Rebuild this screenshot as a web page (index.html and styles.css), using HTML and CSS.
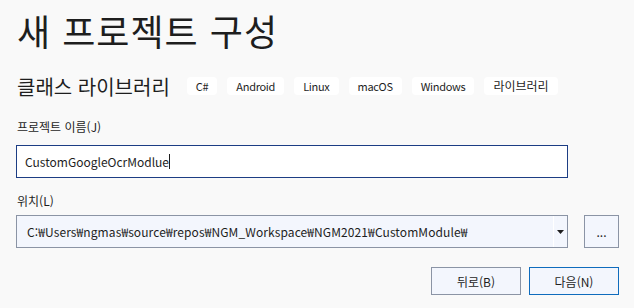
FILE: index.html
```html
<!DOCTYPE html>
<html lang="ko">
<head>
    <meta charset="UTF-8">
    <title>새 프로젝트 구성</title>
    <link rel="stylesheet" href="styles.css">
</head>
<body>
<div class="dialog">
    <h1>새 프로젝트 구성</h1>

    <div class="template">
        <span class="template-name">클래스 라이브러리</span>
        <div class="tags">
            <span class="tag">C#</span>
            <span class="tag">Android</span>
            <span class="tag">Linux</span>
            <span class="tag">macOS</span>
            <span class="tag">Windows</span>
            <span class="tag tag-ko">라이브러리</span>
        </div>
    </div>

    <label class="field-label">프로젝트 이름(J)</label>
    <div class="text-box focused">
        <span class="value">CustomGoogleOcrModlue</span><span class="caret"></span>
    </div>

    <label class="field-label location-label">위치(L)</label>
    <div class="location-row">
        <div class="combo">
            <span class="value">C:₩Users₩ngmas₩source₩repos₩NGM_Workspace₩NGM2021₩CustomModule₩</span>
            <span class="combo-arrow">
                <svg width="7" height="4" viewBox="0 0 7 4"><path d="M0 0h7L3.5 4z" fill="#1e1e1e"/></svg>
            </span>
        </div>
        <button class="browse">...</button>
    </div>

    <div class="actions">
        <button class="btn">뒤로(B)</button>
        <button class="btn primary">다음(N)</button>
    </div>
</div>
</body>
</html>
```

FILE: styles.css
```css
body {
    margin: 0;
    background-color: #f9f9f9;
    color: #1e1e1e;
    font-family: "Noto Sans CJK KR", "Noto Sans", sans-serif;
}
.dialog {
    padding: 8px 15px 0 16px;
}
h1 {
    margin: 0 0 0 1px;
    font-size: 36px;
    font-weight: 400;
    line-height: 44px;
    letter-spacing: 1px;
}
.template {
    display: flex;
    align-items: center;
    margin-top: 22px;
    height: 24px;
}
.template-name {
    font-size: 20px;
    margin-left: 1px;
}
.tags {
    display: flex;
    gap: 10px;
    margin-left: 17px;
}
.tag {
    background-color: #fff;
    border-radius: 4px;
    font-size: 11px;
    height: 18px;
    line-height: 18px;
    padding: 0 9px;
    letter-spacing: -0.3px;
}
.tag-ko {
    font-size: 12px;
    letter-spacing: 0;
}
.field-label {
    display: block;
    font-size: 12px;
    line-height: 16px;
    margin-top: 21px;
    margin-left: 1px;
}
.location-label {
    margin-top: 15px;
}
.text-box {
    display: flex;
    align-items: center;
    box-sizing: border-box;
    width: 552px;
    height: 33px;
    margin-top: 10px;
    padding: 0 8px;
    background-color: #fff;
    border: 1px solid #1c3d84;
    font-size: 12px;
}
.caret {
    width: 1px;
    height: 15px;
    background-color: #1e1e1e;
}
.location-row {
    display: flex;
    gap: 16px;
    margin-top: 6px;
}
.combo {
    display: flex;
    align-items: center;
    box-sizing: border-box;
    width: 552px;
    height: 33px;
    padding-left: 10px;
    background-color: #f3f6fd;
    border: 1px solid #8b94a5;
    font-size: 12px;
    letter-spacing: 0.1px;
}
.combo .value {
    flex: 1;
}
.combo-arrow {
    display: flex;
    align-items: center;
    justify-content: center;
    width: 13px;
    height: 100%;
    border-left: 1px solid #fff;
}
.browse {
    box-sizing: border-box;
    width: 35px;
    height: 33px;
    background-color: #f3f6fd;
    border: 1px solid #8b94a5;
    font-family: inherit;
    font-size: 12px;
    color: #1e1e1e;
    padding: 0;
}
.actions {
    display: flex;
    justify-content: flex-end;
    gap: 8px;
    margin-top: 19px;
}
.btn {
    box-sizing: border-box;
    width: 90px;
    height: 28px;
    background-color: #f3f6fd;
    border: 1px solid #8b94a5;
    font-family: inherit;
    font-size: 12px;
    color: #1e1e1e;
    padding: 0;
}
.btn.primary {
    border-color: #0f6cbd;
}
```
